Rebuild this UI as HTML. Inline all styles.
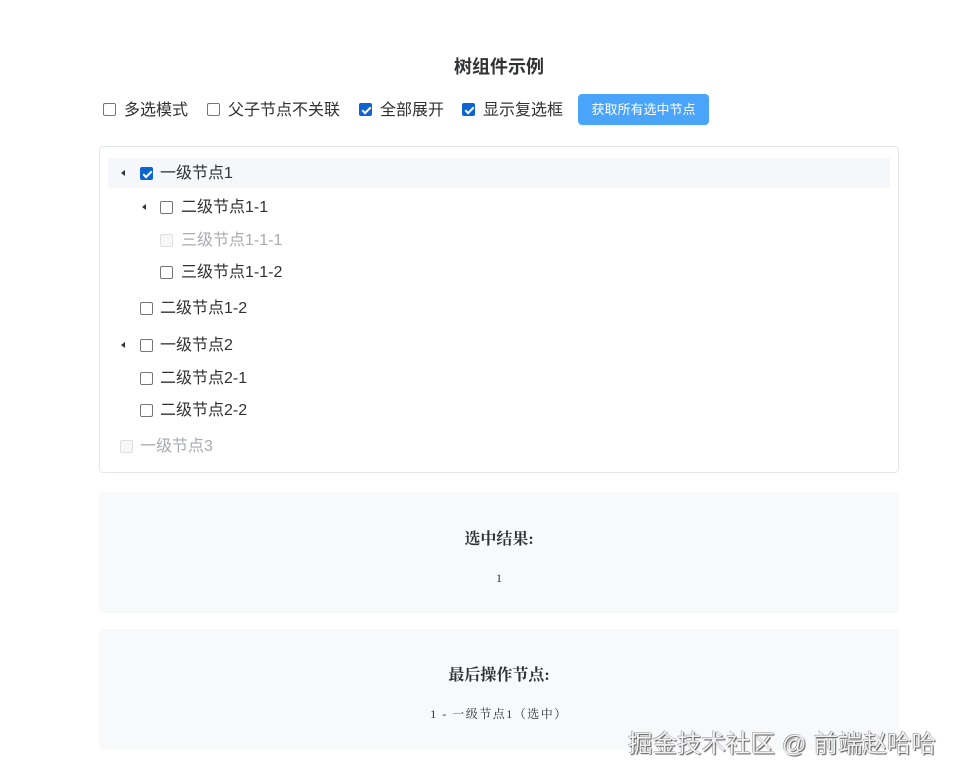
<!DOCTYPE html>
<html><head><meta charset="utf-8"><style>
*{margin:0;padding:0;box-sizing:border-box}
body{width:961px;height:780px;background:#fff;position:relative;overflow:hidden;font-family:"Liberation Sans","Noto Sans CJK SC",sans-serif;color:#303133}
.a{position:absolute;white-space:nowrap}
.cb{position:absolute;width:13px;height:13px;border:1px solid #767676;border-radius:2px;background:#fff}
.cb.on{background:#0b64d0;border-color:#0b64d0}
.cb.on::after{content:"";position:absolute;left:3.5px;top:0.5px;width:3px;height:7px;border:solid #fff;border-width:0 2px 2px 0;transform:rotate(45deg)}
.cb.dis{border-color:#e0e0e0;background:#f7f7f7}
.t{font-size:16px;line-height:20px}
.tri{position:absolute;width:0;height:0;border-top:3px solid transparent;border-bottom:3px solid transparent;border-right:4px solid #333}
.serif{font-family:"Liberation Serif","Noto Serif CJK SC",serif}
</style></head><body>
<div class="a" style="left:0;width:998px;top:55px;text-align:center;font-size:18px;font-weight:bold;line-height:24px">树组件示例</div>

<div class="cb" style="left:103px;top:103px"></div><div class="a t" style="left:124px;top:101px">多选模式</div>
<div class="cb" style="left:207px;top:103px"></div><div class="a t" style="left:228px;top:101px">父子节点不关联</div>
<div class="cb on" style="left:359px;top:103px"></div><div class="a t" style="left:380px;top:101px">全部展开</div>
<div class="cb on" style="left:462px;top:103px"></div><div class="a t" style="left:483px;top:101px">显示复选框</div>
<div class="a" style="left:578px;top:94px;width:131px;height:31px;background:#4aa4fa;border-radius:4px;color:#fff;font-size:13px;line-height:31px;text-align:center">获取所有选中节点</div>

<div class="a" style="left:99px;top:146px;width:800px;height:327px;border:1px solid #e4e7ed;border-radius:4px"></div>
<div class="a" style="left:108px;top:158px;width:782px;height:30px;background:#f5f7fa"></div>

<div class="tri" style="left:121px;top:170px"></div><div class="cb on" style="left:140px;top:167px"></div><div class="a t" style="left:160px;top:164px">一级节点1</div>
<div class="tri" style="left:142px;top:204px"></div><div class="cb" style="left:160px;top:201px"></div><div class="a t" style="left:181px;top:198px">二级节点1-1</div>
<div class="cb dis" style="left:160px;top:234px"></div><div class="a t" style="left:181px;top:231px;color:#a8abb2">三级节点1-1-1</div>
<div class="cb" style="left:160px;top:266px"></div><div class="a t" style="left:181px;top:263px">三级节点1-1-2</div>
<div class="cb" style="left:140px;top:302px"></div><div class="a t" style="left:160px;top:299px">二级节点1-2</div>
<div class="tri" style="left:121px;top:342px"></div><div class="cb" style="left:140px;top:339px"></div><div class="a t" style="left:160px;top:336px">一级节点2</div>
<div class="cb" style="left:140px;top:372px"></div><div class="a t" style="left:160px;top:369px">二级节点2-1</div>
<div class="cb" style="left:140px;top:404px"></div><div class="a t" style="left:160px;top:401px">二级节点2-2</div>
<div class="cb dis" style="left:120px;top:440px"></div><div class="a t" style="left:140px;top:437px;color:#a8abb2">一级节点3</div>

<div class="a" style="left:99px;top:492px;width:800px;height:121px;background:#f8f9fb;border-radius:4px"></div>
<div class="a serif" style="left:99px;width:800px;top:530px;text-align:center;font-size:16px;font-weight:bold;line-height:20px">选中结果:</div>
<div class="a serif" style="left:99px;width:800px;top:571px;text-align:center;font-size:12px;line-height:14px">1</div>

<div class="a" style="left:99px;top:629px;width:800px;height:121px;background:#f8f9fb;border-radius:4px"></div>
<div class="a serif" style="left:99px;width:800px;top:666px;text-align:center;font-size:16px;font-weight:bold;line-height:20px">最后操作节点:</div>
<div class="a serif" style="left:99px;width:800px;top:707px;text-align:center;font-size:12px;line-height:14px;letter-spacing:1.5px">1 - 一级节点1（选中）</div>

<div class="a" style="left:628px;top:730px;font-size:24.5px;line-height:30px;color:#f2f2f2;text-shadow:1px 1px 1px #555,-0.5px -0.5px 0 #888">掘金技术社区 @ 前端赵哈哈</div>
</body></html>
